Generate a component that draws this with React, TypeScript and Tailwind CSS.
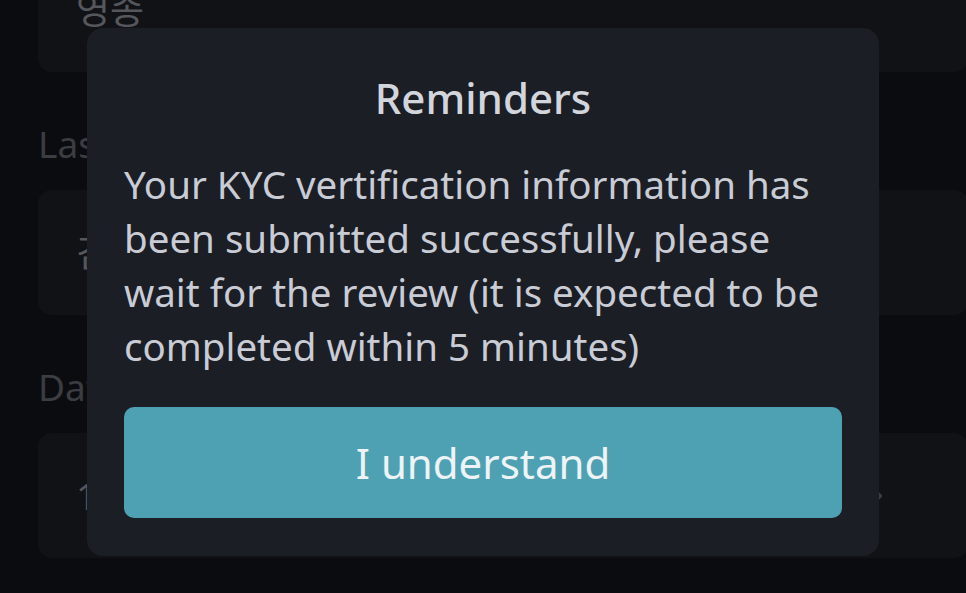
import React from 'react';
import { ChevronRight } from 'lucide-react';

const font = { fontFamily: '"Noto Sans", "Noto Sans CJK KR", sans-serif' };

function Field({ label, value, chevron }: { label?: string; value: string; chevron?: boolean }) {
  return (
    <div>
      {label && (
        <div className="h-[118px] pt-[50px] text-[37px] leading-[44px] text-[#3b3d43]">{label}</div>
      )}
      <div className="h-[125px] rounded-[14px] bg-[#111216] flex items-center justify-between pl-[38px] pr-[39px]">
        <span className="text-[37px] text-[#55575d]">{value}</span>
        {chevron && <ChevronRight className="w-6 h-6 mr-[39px] text-[#3a3c42]" strokeWidth={2.5} />}
      </div>
    </div>
  );
}

export default function App() {
  return (
    <div className="relative h-[593px] overflow-hidden bg-[#0b0c0f]" style={font}>
      {/* form behind the dialog */}
      <div className="mt-[-53px] pl-[38px] w-[930px] box-content">
        <Field value="영종" />
        <Field label="Last name" value="김" />
        <Field label="Date of birth" value="1995-08-12" chevron />
      </div>

      {/* dialog */}
      <div className="absolute inset-0 flex justify-center items-start pt-[28px]">
        <div className="w-[792px] h-[528px] rounded-[16px] bg-[#1b1e25] px-[37px] pt-[44px] flex flex-col">
          <h2 className="text-center text-[42px] leading-[52px] font-medium text-[#d3d5dd]">Reminders</h2>
          <p className="mt-[33px] text-[38.5px] leading-[54px] text-[#c9ccd5]">
            Your KYC vertification information has been submitted successfully, please wait for the review (it is expected to be completed within 5 minutes)
          </p>
          <button className="mt-auto mb-[38px] h-[111px] w-full rounded-[10px] bg-[#4ea1b3] text-[42px] text-[#eef4f6]">
            I understand
          </button>
        </div>
      </div>
    </div>
  );
}
